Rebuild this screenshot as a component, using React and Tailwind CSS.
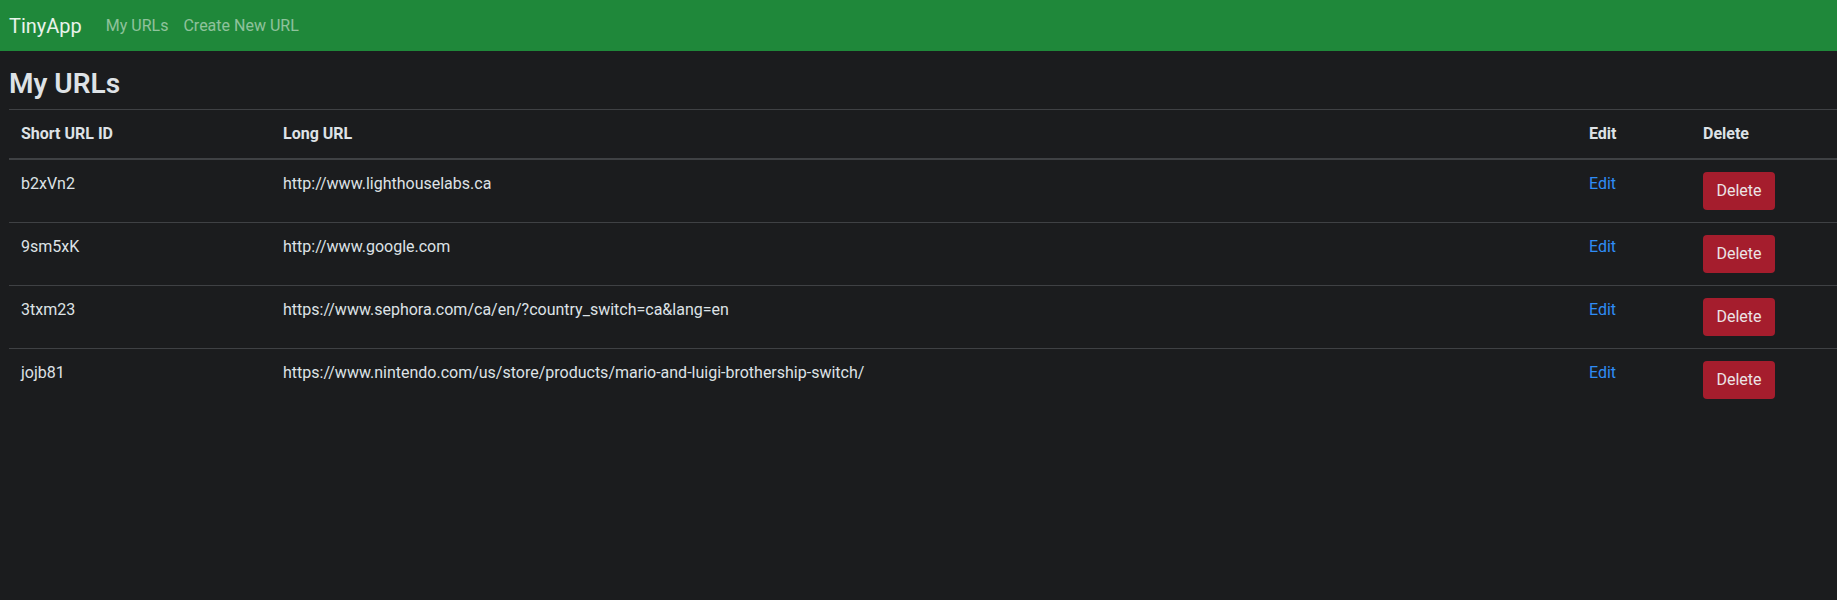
import React from "react";

const ROWS = [
  { id: "b2xVn2", url: "http://www.lighthouselabs.ca" },
  { id: "9sm5xK", url: "http://www.google.com" },
  { id: "3txm23", url: "https://www.sephora.com/ca/en/?country_switch=ca&lang=en" },
  { id: "jojb81", url: "https://www.nintendo.com/us/store/products/mario-and-luigi-brothership-switch/" },
];

const FONT = { fontFamily: '"Segoe UI", Roboto, "Open Sans", sans-serif' };

export default function App() {
  return (
    <div className="min-h-[600px] bg-[#1b1c1e] text-[#dee2e6]" style={FONT}>
      <nav className="flex h-[51px] items-center bg-[#1f883a] px-[9px]">
        <span className="mr-[24px] text-[20px] text-white/90">TinyApp</span>
        <a className="mr-[15px] text-[16px] text-white/50">My URLs</a>
        <a className="text-[16px] text-white/50">Create New URL</a>
      </nav>
      <div className="pl-[9px] pt-[16px]">
        <h2 className="mb-[8px] text-[28px] leading-[1.2] font-semibold">My URLs</h2>
        <table className="w-[1828px] border-collapse text-left text-[16px] leading-[24px]">
          <thead>
            <tr>
              <th className="w-[262px] border-t border-b-2 border-[#3f4144] p-[12px] font-bold">Short URL ID</th>
              <th className="border-t border-b-2 border-[#3f4144] p-[12px] font-bold">Long URL</th>
              <th className="w-[114px] border-t border-b-2 border-[#3f4144] p-[12px] font-bold">Edit</th>
              <th className="w-[146px] border-t border-b-2 border-[#3f4144] p-[12px] font-bold">Delete</th>
            </tr>
          </thead>
          <tbody>
            {ROWS.map((r) => (
              <tr key={r.id} className="align-top">
                <td className="border-t border-[#3f4144] p-[12px]">{r.id}</td>
                <td className="border-t border-[#3f4144] p-[12px]">{r.url}</td>
                <td className="border-t border-[#3f4144] p-[12px]">
                  <a className="text-[#2f8cf5]">Edit</a>
                </td>
                <td className="border-t border-[#3f4144] p-[12px]">
                  <button className="h-[38px] w-[72px] rounded-[4px] bg-[#a51d2d] text-[16px] text-[#ece4e5]">
                    Delete
                  </button>
                </td>
              </tr>
            ))}
          </tbody>
        </table>
      </div>
    </div>
  );
}
